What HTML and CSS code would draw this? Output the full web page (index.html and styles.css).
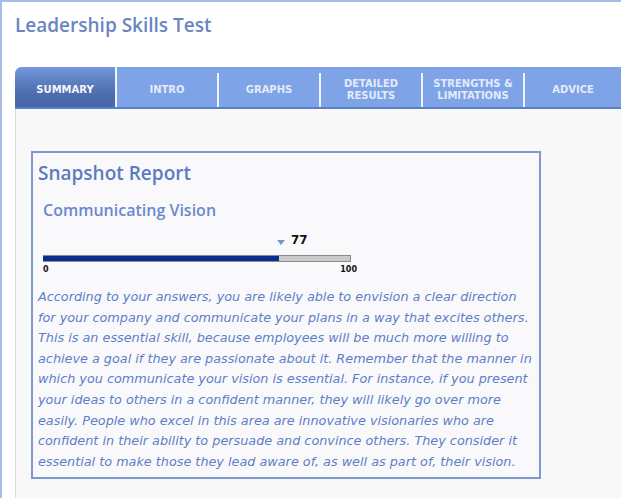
FILE: index.html
```html
<!DOCTYPE html>
<html lang="en">
  <head>
    <meta charset="UTF-8" />
    <title>Leadership Skills Test</title>
    <link rel="stylesheet" href="styles.css">
  </head>
  <body>
    <div class="frame">
      <h1 class="title">Leadership Skills Test</h1>
      <div class="panel">
        <ul class="tabs">
          <li class="active">SUMMARY</li>
          <li>INTRO</li>
          <li>GRAPHS</li>
          <li>DETAILED<br />RESULTS</li>
          <li>STRENGTHS &amp;<br />LIMITATIONS</li>
          <li class="last">ADVICE</li>
        </ul>
        <div class="content">
          <div class="report">
            <h2>Snapshot Report</h2>
            <h3>Communicating Vision</h3>
            <div class="score">
              <div class="marker" style="margin-left: 234px;">
                <span class="arrow"></span>
                <span class="num">77</span>
              </div>
              <div class="bar"><div class="fill" style="width: 77%;"></div></div>
              <div class="scale"><span>0</span><span>100</span></div>
            </div>
            <p>According to your answers, you are likely able to envision a clear direction for your company and communicate your plans in a way that excites others. This is an essential skill, because employees will be much more willing to achieve a goal if they are passionate about it. Remember that the manner in which you communicate your vision is essential. For instance, if you present your ideas to others in a confident manner, they will likely go over more easily. People who excel in this area are innovative visionaries who are confident in their ability to persuade and convince others. They consider it essential to make those they lead aware of, as well as part of, their vision.</p>
          </div>
        </div>
      </div>
    </div>
  </body>
</html>
```

FILE: styles.css
```css
* {
  margin: 0;
  padding: 0;
}
html,
body {
  height: 100%;
}
body {
  background: #fff;
  font-family: "Open Sans", "DejaVu Sans", sans-serif;
}
.frame {
  height: 100%;
  box-sizing: border-box;
  border-left: 2px solid #a6bce4;
  border-top: 2px solid #a6bce4;
  display: flex;
  flex-direction: column;
}
.title {
  font-size: 19px;
  font-weight: 600;
  color: #6a85c3;
  padding: 10px 0 0 13px;
  height: 65px;
  box-sizing: border-box;
}
.panel {
  flex: 1;
  margin-left: 13px;
  display: flex;
  flex-direction: column;
}
.tabs {
  list-style: none;
  display: flex;
  height: 40px;
  background: #7ea3e6;
  border-top-left-radius: 7px;
  border-bottom: 2px solid #5a7fc2;
  overflow: hidden;
}
.tabs li {
  width: 102px;
  box-sizing: border-box;
  margin-top: 6px;
  border-right: 2px solid #eef3fc;
  display: flex;
  align-items: center;
  justify-content: center;
  text-align: center;
  font-family: Verdana, "DejaVu Sans", sans-serif;
  font-size: 10px;
  font-weight: bold;
  line-height: 12px;
  color: #e3ebfa;
}
.tabs li.active {
  margin-top: 0;
  padding-top: 5px;
  color: #f4f6fb;
  background: linear-gradient(#7397da, #4d6daf 65%, #4866a8);
}
.tabs li.last {
  border-right: 0;
  flex: 1;
}
.content {
  flex: 1;
  background: #f8f8f8;
  border-left: 1px solid #dcdcdc;
  padding: 42px 0 0 15px;
}
.report {
  width: 510px;
  height: 328px;
  border: 2px solid #7f98d0;
  background: #f9f9fb;
  padding: 0 0 0 5px;
  box-sizing: border-box;
}
.report h2 {
  font-size: 19px;
  font-weight: 600;
  color: #5b7bc1;
  margin-top: 7px;
}
.report h3 {
  font-size: 16px;
  font-weight: 600;
  color: #6a89cc;
  margin: 13px 0 0 5px;
}
.score {
  margin: 11px 0 0 5px;
  width: 320px;
}
.marker {
  display: flex;
  align-items: center;
  height: 16px;
}
.arrow {
  width: 0;
  height: 0;
  border-left: 4px solid transparent;
  border-right: 4px solid transparent;
  border-top: 5px solid #7a93c9;
  margin-top: 4px;
}
.num {
  font-family: Verdana, "DejaVu Sans", sans-serif;
  font-size: 12px;
  font-weight: bold;
  color: #111;
  margin-left: 6px;
}
.bar {
  margin-top: 7px;
  width: 308px;
  height: 7px;
  background: #cacaca;
  border: 1px solid #8d8d8d;
  border-left: 0;
  box-sizing: border-box;
}
.fill {
  height: 100%;
  background: #0b2e8e;
}
.scale {
  width: 314px;
  display: flex;
  justify-content: space-between;
  font-family: Verdana, "DejaVu Sans", sans-serif;
  font-size: 8px;
  font-weight: bold;
  color: #111;
  line-height: 10px;
  margin-top: 3px;
}
.report p {
  margin-top: 12px;
  font-family: "DejaVu Sans", sans-serif;
  font-size: 12.8px;
  font-style: italic;
  line-height: 20.6px;
  color: #5d7ec8;
  padding-right: 2px;
}
```
